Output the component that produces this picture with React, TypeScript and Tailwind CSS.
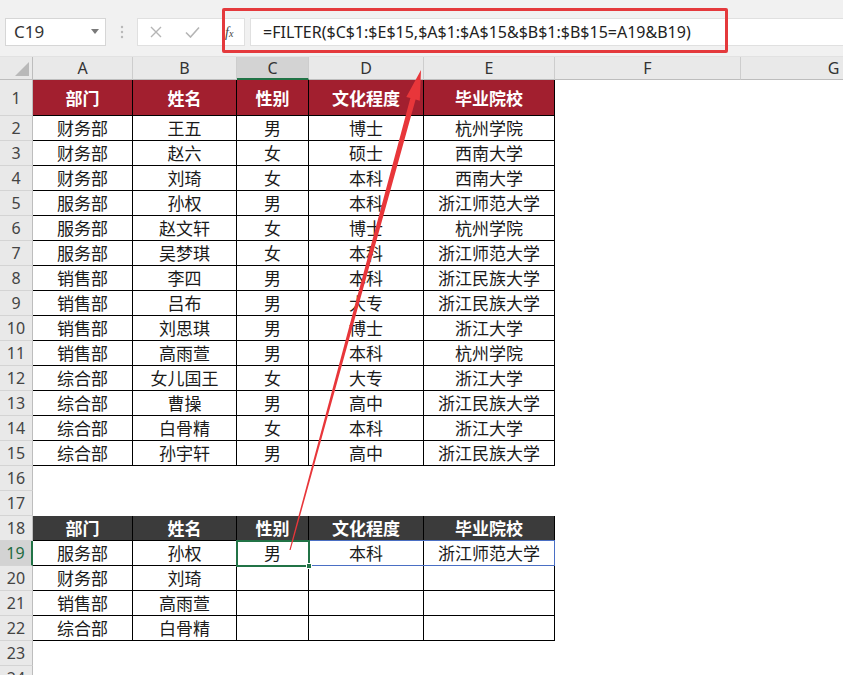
import React from "react";

const COLS = [
  { k: "A", w: 100 },
  { k: "B", w: 104 },
  { k: "C", w: 72 },
  { k: "D", w: 115 },
  { k: "E", w: 131 },
  { k: "F", w: 186 },
  { k: "G", w: 186 },
];

const DATA: string[][] = [
  ["财务部", "王五", "男", "博士", "杭州学院"],
  ["财务部", "赵六", "女", "硕士", "西南大学"],
  ["财务部", "刘琦", "女", "本科", "西南大学"],
  ["服务部", "孙权", "男", "本科", "浙江师范大学"],
  ["服务部", "赵文轩", "女", "博士", "杭州学院"],
  ["服务部", "吴梦琪", "女", "本科", "浙江师范大学"],
  ["销售部", "李四", "男", "本科", "浙江民族大学"],
  ["销售部", "吕布", "男", "大专", "浙江民族大学"],
  ["销售部", "刘思琪", "男", "博士", "浙江大学"],
  ["销售部", "高雨萱", "男", "本科", "杭州学院"],
  ["综合部", "女儿国王", "女", "大专", "浙江大学"],
  ["综合部", "曹操", "男", "高中", "浙江民族大学"],
  ["综合部", "白骨精", "女", "本科", "浙江大学"],
  ["综合部", "孙宇轩", "男", "高中", "浙江民族大学"],
];

const HEAD = ["部门", "姓名", "性别", "文化程度", "毕业院校"];

const LOOKUP: string[][] = [
  ["服务部", "孙权", "男", "本科", "浙江师范大学"],
  ["财务部", "刘琦", "", "", ""],
  ["销售部", "高雨萱", "", "", ""],
  ["综合部", "白骨精", "", "", ""],
];

const cjk = { fontFamily: "'Noto Sans CJK SC', 'Noto Sans', sans-serif" };
const latin = { fontFamily: "'Noto Sans', 'Open Sans', sans-serif" };

function RowHeader({ n, h, active }: { n: number; h: number; active?: boolean }) {
  return (
    <div
      className={
        "w-[33px] shrink-0 flex items-center justify-center text-[16px] border-b border-[#d4d4d4] " +
        (active
          ? "bg-[#d3d3d3] text-[#1e6b41] border-r-2 border-r-[#217346]"
          : "bg-[#e9e9e9] text-[#444] border-r border-r-[#bdbdbd]")
      }
      style={{ ...latin, height: h }}
    >
      {n}
    </div>
  );
}

function Cell({
  w,
  text,
  kind,
}: {
  w: number;
  text?: string;
  kind: "red" | "dark" | "data" | "empty";
}) {
  let cls = "shrink-0 flex items-center justify-center whitespace-nowrap ";
  if (kind === "red") cls += "bg-[#a21f2f] text-white font-bold text-[17px] border-r border-b border-black";
  else if (kind === "dark") cls += "bg-[#3b3b3b] text-white font-bold text-[17px] border-r border-b border-black";
  else if (kind === "data") cls += "bg-white text-[#1a1a1a] text-[17px] border-r border-b border-black";
  else cls += "bg-white";
  return (
    <div className={cls} style={{ ...cjk, width: w }}>
      {text}
    </div>
  );
}

function SheetRow({
  n,
  h,
  cells,
  kind,
  active,
}: {
  n: number;
  h: number;
  cells?: string[];
  kind?: "red" | "dark" | "data";
  active?: boolean;
}) {
  return (
    <div className="flex" style={{ height: h }}>
      <RowHeader n={n} h={h} active={active} />
      {COLS.map((c, i) =>
        cells && i < 5 ? (
          <Cell key={c.k} w={c.w} text={cells[i]} kind={kind!} />
        ) : (
          <Cell key={c.k} w={c.w} kind="empty" />
        )
      )}
    </div>
  );
}

export default function App() {
  return (
    <div className="relative w-[843px] h-[675px] overflow-hidden bg-white">
      {/* Formula bar */}
      <div className="h-[57px] bg-[#f1f1f1] border-b border-[#e2e2e2] flex items-start pt-[18px]">
        <div className="ml-[5px] w-[101px] h-[28px] bg-white border border-[#d6d6d6] flex items-center justify-between pl-[8px] pr-[6px]">
          <span className="text-[17px] text-[#333]" style={latin}>
            C19
          </span>
          <svg width="8" height="6" viewBox="0 0 8 6">
            <path d="M0 0 L8 0 L4 5 Z" fill="#7a7a7a" />
          </svg>
        </div>
        <div className="w-[31px] h-[28px] flex items-center justify-center">
          <svg width="4" height="14" viewBox="0 0 4 14">
            <circle cx="2" cy="2" r="1.2" fill="#b8b8b8" />
            <circle cx="2" cy="7" r="1.2" fill="#b8b8b8" />
            <circle cx="2" cy="12" r="1.2" fill="#b8b8b8" />
          </svg>
        </div>
        <div className="w-[108px] h-[28px] bg-white border border-[#e0e0e0] flex items-center relative">
          <svg className="absolute left-[12px]" width="12" height="12" viewBox="0 0 12 12">
            <path d="M1 1 L11 11 M11 1 L1 11" stroke="#b5b5b5" strokeWidth="1.4" />
          </svg>
          <svg className="absolute left-[47px]" width="15" height="12" viewBox="0 0 15 12">
            <path d="M1 6.5 L5.5 11 L14 1.5" stroke="#b5b5b5" strokeWidth="1.6" fill="none" />
          </svg>
          <span
            className="absolute left-[87px] text-[14px] italic text-[#444]"
            style={{ fontFamily: "'Liberation Serif', serif" }}
          >
            f<span className="text-[10px]">x</span>
          </span>
        </div>
        <div className="ml-[5px] flex-1 h-[28px] bg-white border-y border-l border-[#e0e0e0] flex items-center pl-[12px]">
          <span className="text-[16px] text-[#222] whitespace-nowrap" style={latin}>
            =FILTER($C$1:$E$15,$A$1:$A$15&amp;$B$1:$B$15=A19&amp;B19)
          </span>
        </div>
      </div>

      {/* Column headers */}
      <div className="flex h-[23px]">
        <div className="w-[33px] shrink-0 bg-[#e9e9e9] border-r border-b border-[#bdbdbd] flex items-end justify-end p-[3px]">
          <svg width="14" height="14" viewBox="0 0 14 14">
            <path d="M14 0 L14 14 L0 14 Z" fill="#b9b9b9" />
          </svg>
        </div>
        {COLS.map((c) => (
          <div
            key={c.k}
            className={
              "shrink-0 flex items-center justify-center text-[16px] border-r border-[#cdcdcd] " +
              (c.k === "C"
                ? "bg-[#d3d3d3] text-[#333] border-b-2 border-b-[#217346]"
                : "bg-[#e9e9e9] text-[#333] border-b border-b-[#bdbdbd]")
            }
            style={{ ...latin, width: c.w }}
          >
            {c.k}
          </div>
        ))}
      </div>

      {/* Rows */}
      <SheetRow n={1} h={36} cells={HEAD} kind="red" />
      {DATA.map((r, i) => (
        <SheetRow key={i} n={i + 2} h={25} cells={r} kind="data" />
      ))}
      <SheetRow n={16} h={25} />
      <SheetRow n={17} h={25} />
      <SheetRow n={18} h={25} cells={HEAD} kind="dark" />
      {LOOKUP.map((r, i) => (
        <SheetRow key={i} n={19 + i} h={25} cells={r} kind="data" active={i === 0} />
      ))}
      <SheetRow n={23} h={25} />
      <SheetRow n={24} h={25} />

      {/* Spill range border C19:E19 */}
      <div className="absolute left-[237px] top-[540px] w-[318px] h-[26px] border border-[#4a6fc4] pointer-events-none" />
      {/* Active cell C19 */}
      <div className="absolute left-[236px] top-[540px] w-[74px] h-[27px] border-2 border-[#217346] pointer-events-none" />
      <div className="absolute left-[306px] top-[563px] w-[6px] h-[6px] bg-[#217346] border border-white pointer-events-none" />

      {/* Red highlight box */}
      <div className="absolute left-[222px] top-[8px] w-[506px] h-[45px] border-[3px] border-[#e4393c] rounded-[2px] pointer-events-none" />

      {/* Arrow */}
      <svg className="absolute left-0 top-0 pointer-events-none" width="843" height="675" viewBox="0 0 843 675">
        <polygon
          points="290.6,550 289.4,550 410.4,98.1 406.3,97.1 421,70 419.8,100.8 415.6,99.6"
          fill="#e8363a"
        />
      </svg>
    </div>
  );
}
